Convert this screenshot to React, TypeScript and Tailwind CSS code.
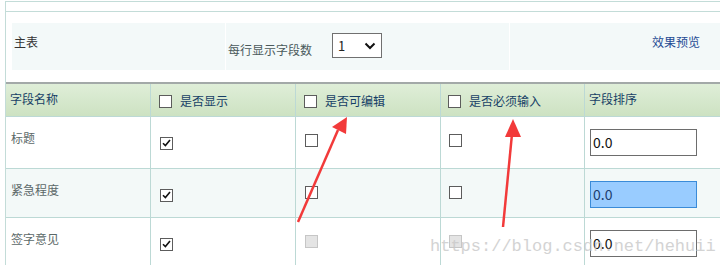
import React from "react";

const font = { fontFamily: '"Noto Sans CJK SC", "Noto Sans", sans-serif' };

function Box({ checked = false, disabled = false }: { checked?: boolean; disabled?: boolean }) {
  return (
    <span
      className={
        "inline-flex h-[13px] w-[13px] items-center justify-center border " +
        (disabled ? "border-[#c6c6c6] bg-[#e4e4e4]" : "border-[#5c5c5c] bg-white")
      }
    >
      {checked && (
        <svg width="9" height="8" viewBox="0 0 9 8">
          <path d="M1 4.2 L3.4 6.6 L8 1" fill="none" stroke="#111" strokeWidth="1.6" />
        </svg>
      )}
    </span>
  );
}

const rows = [
  { name: "标题", show: true, edit: "off", must: "off", active: false, h: "h-[52px]", bg: "bg-white" },
  { name: "紧急程度", show: true, edit: "off", must: "off", active: true, h: "h-[49px]", bg: "bg-[#f3f9f8]" },
  { name: "签字意见", show: true, edit: "dis", must: "dis", active: false, h: "h-[49px]", bg: "bg-white" },
];

export default function App() {
  return (
    <div className="relative h-[265px] w-[720px] overflow-hidden bg-white text-[12px]" style={font}>
      <div className="ml-[5px] mt-px border-l border-t border-[#c3dcd8]">
        <div className="h-[10px] border-b border-[#c3dcd8]" />

        {/* panel */}
        <div className="flex gap-px pl-[6px] pt-[11px]">
          <div className="h-[47px] w-[213px] bg-[#f3f9f9] pl-[2px] pt-[10px] text-[#333]">主表</div>
          <div className="flex h-[47px] w-[283px] items-start bg-[#f3f9f9] pl-[2px] pt-[10px]">
            <span className="mt-[8px] text-[#4a5a5c]">每行显示字段数</span>
            <div className="ml-[20px] flex h-[25px] w-[50px] items-center justify-between border border-[#707070] bg-white pl-[5px] pr-[5px] text-[13px] text-[#222]">
              <span>1</span>
              <svg width="12" height="8" viewBox="0 0 12 8">
                <path d="M1.5 1.5 L6 6 L10.5 1.5" fill="none" stroke="#111" strokeWidth="2" />
              </svg>
            </div>
          </div>
          <div className="flex h-[47px] flex-1 justify-end bg-[#f3f9f9] pr-[20px] pt-[10px] text-[#1f4b94]">效果预览</div>
        </div>

        {/* table */}
        <div className="mt-[12px] border-t-2 border-[#a3a9a8]">
          <div className="flex h-[33px] border-b border-[#bcd9d5] bg-gradient-to-b from-[#dfeed8] to-[#cde2c2] text-[#173f66]">
            <div className="w-[145px] border-r border-[#bcd9d5] pl-[4px] pt-[6px]">字段名称</div>
            <div className="flex w-[145px] items-center gap-[8px] border-r border-[#bcd9d5] pl-[8px] pt-[2px]">
              <Box />
              <span>是否显示</span>
            </div>
            <div className="flex w-[145px] items-center gap-[8px] border-r border-[#bcd9d5] pl-[8px] pt-[2px]">
              <Box />
              <span>是否可编辑</span>
            </div>
            <div className="flex w-[144px] items-center gap-[8px] border-r border-[#bcd9d5] pl-[7px] pt-[2px]">
              <Box />
              <span>是否必须输入</span>
            </div>
            <div className="flex-1 pl-[4px] pt-[6px]">字段排序</div>
          </div>

          {rows.map((r) => (
            <div key={r.name} className={"flex border-b border-[#bcd9d5] text-[#5b6868] " + r.h + " " + r.bg}>
              <div className="w-[145px] border-r border-[#bcd9d5] pl-[5px] pt-[12px]">{r.name}</div>
              <div className="w-[145px] border-r border-[#bcd9d5] pl-[9px] pt-[16px]">
                <Box checked={r.show} />
              </div>
              <div className="w-[145px] border-r border-[#bcd9d5] pl-[9px] pt-[16px]">
                <Box disabled={r.edit === "dis"} />
              </div>
              <div className="w-[144px] border-r border-[#bcd9d5] pl-[8px] pt-[16px]">
                <Box disabled={r.must === "dis"} />
              </div>
              <div className="flex-1 pl-[5px] pt-[12px]">
                <div
                  className={
                    "flex h-[27px] w-[107px] items-center border pl-[2px] text-[14px] " +
                    (r.active ? "border-[#3a8bd8] bg-[#99ccff] text-[#1d3f6e]" : "border-[#6d6d6d] bg-white text-[#111]")
                  }
                >
                  0.0
                </div>
              </div>
            </div>
          ))}
        </div>
      </div>

      {/* annotation arrows */}
      <svg className="absolute left-0 top-0" width="720" height="265" viewBox="0 0 720 265">
        <path d="M298 222 L338 130" stroke="#f23a3a" strokeWidth="2.5" fill="none" />
        <path d="M347 117 L332 127 L346 134 Z" fill="#f23a3a" />
        <path d="M503 227 L512 134" stroke="#f23a3a" strokeWidth="2.5" fill="none" />
        <path d="M513 119 L505 137 L521 137 Z" fill="#f23a3a" />
      </svg>

      <div
        className="pointer-events-none absolute left-[430px] top-[234px] text-[17px] text-[#c9c9c9] opacity-80"
        style={{ fontFamily: '"Liberation Mono", monospace' }}
      >
        https://blog.csdn.net/hehuii
      </div>
    </div>
  );
}
